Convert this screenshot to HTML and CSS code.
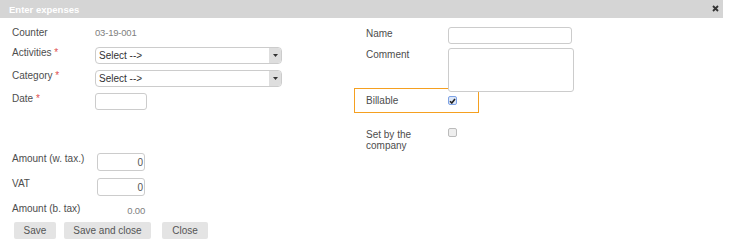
FILE: index.html
```html
<!DOCTYPE html>
<html>
<head>
<meta charset="utf-8">
<link rel="stylesheet" href="styles.css">
</head>
<body>
<div class="dialog">
  <div class="titlebar">
    <span class="title">Enter expenses</span>
    <svg class="close" width="7" height="7" viewBox="0 0 7 7"><path d="M1 1L6 6M6 1L1 6" stroke="#333" stroke-width="1.8"/></svg>
  </div>
  <div class="content">
    <div class="col left">
      <div class="row r-counter">
        <div class="label">Counter</div>
        <div class="value">03-19-001</div>
      </div>
      <div class="row r-sel">
        <div class="label">Activities <span class="req">*</span></div>
        <div class="select"><span class="sel-text">Select --&gt;</span><span class="sel-btn"><svg width="5" height="3" viewBox="0 0 5 3"><path d="M0 0H5L2.5 3Z" fill="#333"/></svg></span></div>
      </div>
      <div class="row r-sel">
        <div class="label">Category <span class="req">*</span></div>
        <div class="select"><span class="sel-text">Select --&gt;</span><span class="sel-btn"><svg width="5" height="3" viewBox="0 0 5 3"><path d="M0 0H5L2.5 3Z" fill="#333"/></svg></span></div>
      </div>
      <div class="row r-date">
        <div class="label">Date <span class="req">*</span></div>
        <div class="input date"></div>
      </div>
      <div class="row r-amt">
        <div class="label">Amount (w. tax.)</div>
        <div class="input num">0</div>
      </div>
      <div class="row r-amt">
        <div class="label">VAT</div>
        <div class="input num">0</div>
      </div>
      <div class="row r-btax">
        <div class="label">Amount (b. tax)</div>
        <div class="value num-val">0.00</div>
      </div>
      <div class="buttons">
        <button class="btn b-save">Save</button>
        <button class="btn b-saveclose">Save and close</button>
        <button class="btn b-close">Close</button>
      </div>
    </div>
    <div class="col right">
      <div class="row r-name">
        <div class="label">Name</div>
        <div class="input name"></div>
      </div>
      <div class="row r-comment">
        <div class="label">Comment</div>
        <div class="input comment"></div>
      </div>
      <div class="row r-billable">
        <div class="label">Billable</div>
        <span class="check checked"><svg width="7" height="6" viewBox="0 0 7 6"><path d="M1 3.2L2.8 5L6 1" stroke="#222" stroke-width="1.6" fill="none"/></svg></span>
      </div>
      <div class="row r-setby">
        <div class="label two">Set by the<br>company</div>
        <span class="check"></span>
      </div>
    </div>
  </div>
</div>
</body>
</html>
```
FILE: styles.css
```css
* { box-sizing: border-box; }
body {
  margin: 0;
  background: #fff;
  font-family: "Liberation Sans", Arial, sans-serif;
  font-size: 10px;
  color: #555;
}
.dialog { width: 723px; }
.titlebar {
  height: 18px;
  background: #d5d5d5;
  display: flex;
  align-items: center;
  justify-content: space-between;
  padding: 0 4px 0 9px;
}
.title { color: #fff; font-weight: bold; font-size: 9.5px; }
.close { display: block; margin-top: -2px; }
.content { display: flex; padding-top: 9px; }
.col.left { width: 354px; padding-left: 12px; }
.col.right { width: 240px; }
.row { display: flex; align-items: flex-start; }
.label { width: 83px; line-height: 12px; color: #4d4d4d; flex: none; }
.req { color: #e05050; }
.value { line-height: 12px; color: #808080; font-size: 9.5px; letter-spacing: -0.2px; }
.r-counter { height: 17px; margin-bottom: 3px; }
.r-sel { height: 17px; margin-bottom: 6px; }
.r-date { height: 17px; margin-bottom: 43px; }
.r-amt { height: 18px; margin-bottom: 7px; }
.r-btax { height: 12px; margin-bottom: 7px; }
.select {
  width: 187px;
  height: 17px;
  border: 1px solid #ccc;
  border-radius: 4px;
  display: flex;
  align-items: center;
  overflow: hidden;
}
.sel-text { flex: 1; padding-left: 3px; color: #333; }
.sel-btn {
  width: 12px;
  height: 100%;
  background: #dedede;
  display: flex;
  align-items: center;
  justify-content: center;
}
.sel-btn svg { display: block; }
.input {
  border: 1px solid #ccc;
  border-radius: 3px;
  background: #fff;
}
.date { width: 52px; height: 17px; }
.num {
  width: 48px;
  height: 18px;
  margin-left: 2px;
  text-align: right;
  padding-right: 1px;
  line-height: 17px;
  color: #555;
}
.num-val { width: 50px; text-align: right; padding-top: 2px; }
.buttons { display: flex; padding-left: 2px; }
.btn {
  height: 17px;
  border: none;
  border-radius: 2px;
  background: #e4e4e4;
  color: #555;
  font-family: inherit;
  font-size: 10px;
  padding: 0;
  text-align: center;
}
.b-save { width: 42px; }
.b-saveclose { width: 87px; margin-left: 8px; }
.b-close { width: 46px; margin-left: 11px; }
.col.right .row { padding-left: 12px; }
.col.right .label { width: 82px; }
.r-name { height: 17px; margin-bottom: 4px; }
.r-name .label, .r-comment .label { padding-top: 1px; }
.name { width: 124px; height: 17px; }
.r-comment { height: 44px; margin-bottom: -4px; }
.comment { width: 126px; height: 44px; }
.r-billable {
  width: 125px;
  height: 25px;
  border: 1px solid #f5a020;
  align-items: center !important;
  padding-left: 11px !important;
}
.r-setby { margin-top: 15px; }
.label.two { line-height: 11px; padding-top: 1px; }
.check {
  width: 9px;
  height: 9px;
  border: 1px solid #bbb;
  border-radius: 2px;
  background: #eee;
  display: flex;
  align-items: center;
  justify-content: center;
  flex: none;
}
.check.checked {
  border-color: #7ea3e6;
  background: #dde7f7;
}
.check svg { display: block; }
```
